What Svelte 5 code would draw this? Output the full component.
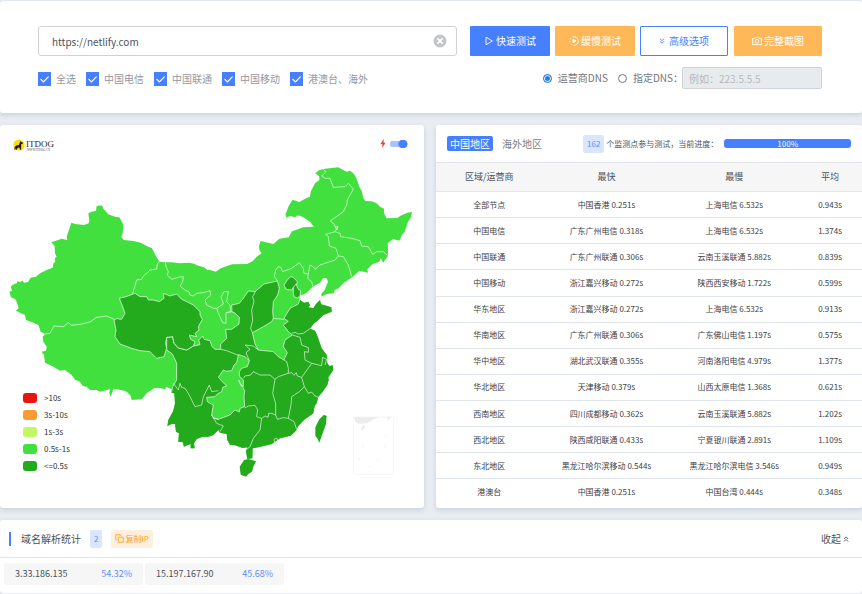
<script>
  let url = $state('https://netlify.com');
  let dns = $state('isp');
  let customDns = $state('');
  let animate = $state(true);

  let lines = $state([
    { name: '全选', on: true },
    { name: '中国电信', on: true },
    { name: '中国联通', on: true },
    { name: '中国移动', on: true },
    { name: '港澳台、海外', on: true }
  ]);

  const legend = [
    ['>10s', '#e81410'],
    ['3s-10s', '#fa9a33'],
    ['1s-3s', '#c0f763'],
    ['0.5s-1s', '#42e03f'],
    ['<=0.5s', '#24aa1d']
  ];

  const rows = [
    ['全部节点', '中国香港 0.251s', '上海电信 6.532s', '0.943s'],
    ['中国电信', '广东广州电信 0.318s', '上海电信 6.532s', '1.374s'],
    ['中国联通', '广东广州联通 0.306s', '云南玉溪联通 5.882s', '0.839s'],
    ['中国移动', '浙江嘉兴移动 0.272s', '陕西西安移动 1.722s', '0.599s'],
    ['华东地区', '浙江嘉兴移动 0.272s', '上海电信 6.532s', '0.913s'],
    ['华南地区', '广东广州联通 0.306s', '广东佛山电信 1.197s', '0.575s'],
    ['华中地区', '湖北武汉联通 0.355s', '河南洛阳电信 4.979s', '1.377s'],
    ['华北地区', '天津移动 0.379s', '山西太原电信 1.368s', '0.621s'],
    ['西南地区', '四川成都移动 0.362s', '云南玉溪联通 5.882s', '1.202s'],
    ['西北地区', '陕西咸阳联通 0.433s', '宁夏银川联通 2.891s', '1.109s'],
    ['东北地区', '黑龙江哈尔滨移动 0.544s', '黑龙江哈尔滨电信 3.546s', '0.949s'],
    ['港澳台', '中国香港 0.251s', '中国台湾 0.444s', '0.348s']
  ];

  const ips = [
    ['3.33.186.135', '54.32%'],
    ['15.197.167.90', '45.68%']
  ];

  const mainland =
    'M28 515L36 512 32 500 38 494 50 490 52 484 60 486 68 482 72 488 84 486 92 473 108 470 120 460 140 450 158 443 160 430 166 425 164 415 170 410 165 400 164 378 154 367 185 356 202 360 200 350 205 335 214 308 225 312 252 315 266 310 268 302 265 280 275 275 288 272 290 258 306 256 310 266 325 283 345 290 358 292 368 310 370 322 368 340 364 352 372 360 400 363 422 368 440 378 456 385 466 405 478 425 496 427 515 427 540 430 568 428 585 432 590 436 612 442 622 450 630 450 648 455 662 445 696 433 740 432 758 424 770 410 785 400 778 390 777 378 782 363 820 372 838 356 866 352 876 334 910 322 942 320 930 305 910 292 900 287 890 287 886 292 870 288 860 293 856 284 866 258 878 239 898 246 915 236 930 230 932 215 945 190 958 180 958 170 952 164 946 160 958 150 975 146 1015 142 1024 147 1040 155 1050 152 1060 160 1068 172 1078 200 1086 215 1090 235 1096 243 1115 244 1130 250 1140 260 1152 266 1152 280 1160 295 1192 294 1200 288 1222 278 1236 276 1232 294 1224 305 1214 335 1206 345 1198 362 1180 357 1163 370 1164 385 1164 408 1155 420 1150 428 1142 415 1138 425 1118 432 1102 448 1104 458 1078 452 1068 462 1056 472 1030 490 1016 505 1004 510 1002 520 980 522 965 530 964 522 974 510 984 485 980 475 970 474 960 488 938 500 920 518 910 524 902 524 898 532 900 540 912 548 925 546 930 556 926 562 940 565 948 552 960 540 963 553 994 562 995 575 978 582 970 585 955 600 940 612 930 626 945 632 951 645 965 685 980 705 982 730 988 738 998 736 1000 750 985 772 986 780 982 795 968 815 955 830 950 850 944 858 940 880 912 900 895 918 888 932 880 940 872 947 840 955 825 965 815 972 800 976 775 982 758 985 757 1015 742 1017 738 995 742 982 728 984 705 976 690 974 682 960 680 942 660 938 655 930 640 945 625 950 608 950 590 957 582 970 584 985 572 985 572 972 562 976 552 980 548 966 535 965 537 940 528 935 525 912 515 912 502 918 505 900 520 872 525 850 523 820 514 818 515 808 508 805 500 800 495 808 480 804 462 805 440 820 425 838 395 840 392 828 380 815 372 812 350 807 340 808 332 830 328 818 330 808 300 815 290 810 270 810 260 800 248 798 240 785 226 780 215 765 195 750 180 752 160 740 135 728 132 705 125 695 138 692 140 680 130 665 128 650 135 642 122 635 115 615 100 608 78 600 75 585 60 578 48 572 56 565 50 545 45 537 33 532Z';

  const qinghai =
    'M358 535L378 530 405 520 420 530 440 530 445 540 460 540 478 545 492 535 490 520 510 528 530 522 545 538 560 545 580 555 600 575 600 585 607 598 595 620 597 630 585 640 590 650 568 645 572 658 585 665 580 678 560 690 535 684 522 670 518 650 500 652 497 670 500 685 492 710 470 715 450 695 420 692 395 685 360 672 345 650 348 630 342 600 350 596 365 598 375 580 368 560Z';

  const south =
    'M500 652L518 650 522 670 535 684 560 690 580 678 600 674 596 660 608 648 612 658 630 662 636 680 645 688 662 688 662 672 680 655 677 628 695 628 717 612 718 592 706 580 696 575 695 555 718 550 730 535 745 513 765 515 792 492 832 483 838 505 833 525 820 545 818 575 820 595 815 605 790 620 757 638 765 672 775 690 820 695 835 710 852 720 862 698 850 680 855 660 877 645 865 635 850 615 865 604 852 595 870 565 895 552 900 537 1050 537 1050 900 900 1010 700 1060 480 1000 480 860 515 815 518 800 530 780 530 730 522 712 515 700 500 690Z';

  const southwestLight =
    'M715 704L735 710 748 722 742 740 725 745 718 755 718 768 730 780 730 800 722 796 716 780 734 812 732 830 734 860 720 865 718 876 705 870 690 885 655 898 640 893 635 885 640 855 630 850 622 845 620 832 645 830 652 822 665 815 668 802 680 798 668 786 655 772 670 750 680 754 695 752 702 735 710 728Z';

  const borders = [
    'M478 425L472 432 470 447 450 450 440 460 430 468 425 478 410 480 404 500 398 520',
    'M135 642L150 640 162 618 190 620 205 608 215 616 245 612 270 606 290 592 320 588 342 598',
    'M496 427L498 440 505 455 502 465 515 478 535 472 550 470 548 485 540 498 555 510 567 516 570 525 580 528 590 520 610 518 630 512 632 525 615 540 620 555 640 565 650 565 670 552 663 530 672 515 685 515 680 545 690 555 692 575 678 578 678 610 668 608 655 580 650 565',
    'M678 578L696 575M768 512L758 530 762 545 755 570 758 600 752 625 757 638',
    'M833 483L823 470 827 450 835 440 842 442 848 455 875 445 898 428 910 445 912 460 925 462 930 435 940 440 945 448 960 435 1005 420 1015 408 1008 385 988 378 985 350 977 343 1005 335 1013 320 1005 320 1002 312 991 303 1030 275 1040 255 1042 240 1060 207 1045 190 1035 200 1000 202 990 175 975 175 965 168 978 155 970 148',
    'M925 462L923 475 935 485 938 498M1015 408L1030 410 1045 435 1055 470',
    'M1005 335L1020 340 1022 350 1055 355 1080 362 1085 378 1105 380 1118 403 1130 395 1150 395 1165 408',
    'M1005 320L1010 330 1014 320',
    'M875 640L885 637 895 642 910 640 930 626M877 645L900 652 905 675 925 683 925 697 913 695 915 720 935 730 905 772 892 768 889 758 882 766 875 758 865 760 865 745 860 725 852 720',
    'M935 730L965 737 968 712 980 718 975 735',
    'M775 690L760 678 735 675 750 688 738 698 748 722M662 688L680 692 715 706M730 775L735 768 752 765 760 755 780 765 810 765 825 778 835 770 865 760',
    'M825 778L818 820 827 850 827 885M734 864L745 858 765 856 773 870 770 890 785 895 795 888 804 892 806 880 815 880 827 885 832 898 850 893 865 895',
    'M905 772L913 800 898 815 875 830 873 855 865 895 882 905 890 928M913 800L925 820 935 816 945 828 955 832',
    'M785 895L780 930 760 955 750 980 740 988M635 885L650 910 670 918 660 935M640 895L655 898',
    'M520 790L535 810 540 790 545 802 555 805 565 820 585 860 605 855 610 830 628 795 635 815 655 812',
    'M822 958L830 954 834 962 824 968Z'
  ];
</script>

{#snippet chevrons(up)}
  <svg class="chev" viewBox="0 0 8 8" aria-hidden="true">
    <path d={up ? 'M1.2 4L4 1.2 6.8 4M1.2 7.4L4 4.6 6.8 7.4' : 'M1.2 .8L4 3.6 6.800 .8M1.2 4.2L4 7 6.8 4.2'} />
  </svg>
{/snippet}

<main>
  <section class="card query">
    <div class="bar">
      <div class="url">
        <input type="text" aria-label="网址" bind:value={url} />
        <button class="clear" type="button" aria-label="清空" onclick={() => (url = '')}>
          <svg viewBox="0 0 14 14"><circle cx="7" cy="7" r="6.5" fill="#c4c5c7" /><path d="M4.4 4.4l5.2 5.2M9.6 4.4L4.4 9.6" stroke="#fff" stroke-width="1.6" /></svg>
        </button>
      </div>
      <div class="actions">
        <button class="btn blue" type="button">
          <svg viewBox="0 0 10 10"><path d="M2 1.2L8.4 5 2 8.8Z" /></svg>快速测试
        </button>
        <button class="btn orange" type="button">
          <svg viewBox="0 0 10 10"><circle cx="5" cy="5" r="4.3" stroke-dasharray="13.5 1.6 1.6 1.6 1.6 1.6 1.6 1.6" transform="rotate(-90 5 5)" /><path d="M4 3.2L6.9 5 4 6.8Z" fill="currentColor" /></svg>缓慢测试
        </button>
        <button class="btn outline" type="button">{@render chevrons(false)}高级选项</button>
        <button class="btn orange wide" type="button">
          <svg viewBox="0 0 10 10"><path d="M.6 2.4h2.2l.8-1.2h2.8l.8 1.2h2.2v6.2H.6Z" /><circle cx="5" cy="5.3" r="1.8" /></svg>完整截图
        </button>
      </div>
    </div>
    <div class="options">
      <div class="lines">
        {#each lines as line}
          <label><input type="checkbox" bind:checked={line.on} />{line.name}</label>
        {/each}
      </div>
      <div class="dns">
        <label><input type="radio" name="dns" value="isp" bind:group={dns} />运营商DNS</label>
        <label><input type="radio" name="dns" value="custom" bind:group={dns} />指定DNS：</label>
        <input class="server" type="text" aria-label="指定DNS" placeholder="例如：223.5.5.5" disabled={dns !== 'custom'} bind:value={customDns} />
      </div>
    </div>
  </section>

  <div class="columns">
    <section class="card map">
      <header>
        <svg class="logo" viewBox="0 0 42 13" role="img" aria-label="ITDOG">
          <circle cx="6" cy="6" r="5.6" fill="#f9dc0a" />
          <path d="M1 11.5l.8-3.6 1.5-1.4 2.6-.6 1-2.4.4-1.6 1 1.2 1.6.6-.2 1-1.4.3-.2 2.6.1 3.2H7.1l-.6-2.4-1.9.3-.9 2.1H2.4l.2-1.9Z" fill="#1e1a10" />
          <text x="13" y="8" class="brand">ITDOG</text>
          <text x="14" y="12" class="site">WWW.ITDOG.CN</text>
        </svg>
        <label class="anim">
          <svg viewBox="0 0 6 9" aria-hidden="true"><path d="M3.8 0L.4 5h2L2 9l3.6-5.2h-2Z" fill="#f2413d" /></svg>
          <input type="checkbox" role="switch" aria-label="动画" bind:checked={animate} />
        </label>
      </header>
      <svg class="china" viewBox="0 120 1272 1044" role="img" aria-label="中国地图">
        <defs><clipPath id="coast"><path d={mainland} /></clipPath></defs>
        <path d={mainland} fill="#42e03f" />
        <g clip-path="url(#coast)" class="dark">
          <path d={south} />
          <path d={qinghai} />
          <path d="M852 495L862 480 872 470 880 472 892 485 888 500 880 502 875 510 858 508Z" />
          <path d="M880 502L888 492 895 508 902 512 900 528 892 534 882 530 880 518Z" />
          <path class="light" d={southwestLight} />
        </g>
        <g class="edges" clip-path="url(#coast)">
          {#each borders as d}<path {d} />{/each}
          <path d="M820 595L852 598" />
        </g>
        <path fill="#24aa1d" d="M732 1020L745 1017 768 1024 760 1040 756 1055 745 1062 738 1070 722 1064 719 1040Z" />
        <path fill="#24aa1d" d="M972 884L980 888 978 912 966 945 958 968 952 955 946 948 946 922 958 898Z" />
        <g class="inset">
          <rect x="1061" y="891" width="120" height="172" />
          <path d="M1063 892h74l-20 8-16 10-26 2-10-8Z" />
          <path d="M1161 892h10l-6 8ZM1084 924l6-7h5l-5 10-6 4ZM1086 984l6-8M1158 950v-8M1153 985l5-12M1074 1012l5 9M1132 1023l5-8M1106 1041h4" stroke="#ececec" />
        </g>
      </svg>
      <ul class="legend">
        {#each legend as [label, color]}
          <li><i style:background={color}></i>{label}</li>
        {/each}
      </ul>
    </section>

    <section class="card result">
      <header>
        <button class="tab on" type="button">中国地区</button>
        <button class="tab" type="button">海外地区</button>
        <div class="status">
          <span class="badge">162</span>
          <span>个监测点参与测试，当前进度：</span>
          <div class="progress" role="progressbar" aria-label="当前进度" aria-valuenow="100">100%</div>
        </div>
      </header>
      <table>
        <thead>
          <tr><th>区域/运营商</th><th>最快</th><th>最慢</th><th>平均</th></tr>
        </thead>
        <tbody>
          {#each rows as row}
            <tr>{#each row as cell}<td>{cell}</td>{/each}</tr>
          {/each}
        </tbody>
      </table>
    </section>
  </div>

  <section class="card resolve">
    <header>
      <h2>域名解析统计</h2>
      <span class="badge">2</span>
      <button class="copy" type="button">
        <svg viewBox="0 0 9 9"><path d="M3.2 3.2h5v5h-5ZM1.8 5.8h-1v-5h5v1" /></svg>复制IP
      </button>
      <button class="fold" type="button">收起{@render chevrons(true)}</button>
    </header>
    <div class="ips">
      {#each ips as [ip, share]}
        <div class="ip"><span>{ip}</span><b>{share}</b></div>
      {/each}
    </div>
  </section>
</main>

<style>
  :global(body) {
    background: #e9edf2;
  }
  main {
    padding-top: 1px;
    font: 10px/16px 'Noto Sans CJK SC', sans-serif;
    color: #4d5259;
    display: flex;
    flex-direction: column;
    gap: 12px;
    overflow: hidden;
  }
  * {
    box-sizing: border-box;
  }
  button,
  input {
    font: inherit;
    color: inherit;
    margin: 0;
  }
  button {
    border: 0;
    padding: 0;
    background: none;
    cursor: pointer;
  }
  svg {
    display: block;
    flex: none;
  }
  .card {
    background: #fff;
    border-radius: 3px;
    box-shadow: 0 2px 5px rgba(120, 140, 165, 0.3);
  }
  .query {
    padding: 25px 40px 24px 38px;
    display: flex;
    flex-direction: column;
    gap: 11px;
  }
  .bar {
    display: flex;
    gap: 13px;
  }
  .url {
    flex: 1;
    display: flex;
    align-items: center;
    border: 1px solid #ced1d9;
    border-radius: 3px;
    padding-right: 9px;
  }
  .url input {
    flex: 1;
    min-width: 0;
    height: 28px;
    border: 0;
    outline: 0;
    background: none;
    padding: 0 13px;
  }
  .clear svg {
    width: 14px;
    height: 14px;
  }
  .actions {
    display: flex;
    gap: 5px;
  }
  .btn {
    display: flex;
    align-items: center;
    justify-content: center;
    gap: 2px;
    width: 80px;
    height: 30px;
    border-radius: 1px;
    color: #fff;
  }
  .btn svg,
  .copy svg,
  .chev {
    width: 10px;
    height: 10px;
    fill: none;
    stroke: currentColor;
    stroke-width: 0.9;
  }
  .blue {
    background: #467fff;
  }
  .orange {
    background: #ffb858;
  }
  .outline {
    gap: 4px;
    width: 88px;
    border: 1px solid #467fff;
    color: #467fff;
    background: #fff;
  }
  .wide {
    width: 88px;
    margin-left: 1px;
  }
  .chev,
  .outline .chev,
  .btn .chev {
    width: 6px;
    height: 6px;
    stroke-width: 1.2;
  }
  .options,
  .lines,
  .dns,
  .options label {
    display: flex;
    align-items: center;
  }
  .options {
    justify-content: space-between;
  }
  .lines {
    gap: 10px;
    padding-top: 2px;
    color: #93989f;
  }
  .lines label {
    gap: 5px;
  }
  .lines input {
    appearance: none;
    width: 13px;
    height: 14px;
    background: #467fff
      url("data:image/svg+xml,%3Csvg xmlns='http://www.w3.org/2000/svg' viewBox='0 0 13 14'%3E%3Cpath d='M2.5 7l3 3L10.600 4.600' fill='none' stroke='white' stroke-width='1.100'/%3E%3C/svg%3E");
  }
  .lines input:not(:checked) {
    background: #fff;
    border: 1px solid #ced1d9;
  }
  .dns {
    color: #6f757d;
  }
  .dns label {
    gap: 6px;
    margin-right: 10px;
  }
  .dns label + label {
    margin-right: -1px;
  }
  .dns input[type='radio'] {
    appearance: none;
    width: 9px;
    height: 9px;
    border: 1px solid #767676;
    border-radius: 50%;
    background: #fff;
  }
  .dns input[type='radio']:checked {
    border-color: #2b7de0;
    background: #2b7de0;
    box-shadow: inset 0 0 0 1px #fff;
  }
  .server {
    width: 140px;
    height: 22px;
    padding: 0 6px;
    border: 1px solid #ced4da;
    border-radius: 2px;
    background: #fff;
  }
  .server:disabled {
    background: #e8ebee;
  }
  .server::placeholder {
    color: #b4b9bf;
    opacity: 1;
  }

  .columns {
    display: grid;
    grid-template-columns: 424fr 426fr;
    gap: 12px;
  }
  .map {
    position: relative;
  }
  .map header {
    display: flex;
    justify-content: space-between;
    align-items: flex-start;
    height: 35px;
    padding: 14px 16px 0 13px;
  }
  .logo {
    width: 42px;
    height: 13px;
  }
  .brand {
    font: 9px 'Liberation Serif', serif;
    fill: #2b2b2b;
  }
  .site {
    font: 3px 'Liberation Serif', serif;
    fill: #555;
  }
  .anim {
    display: flex;
    align-items: center;
    gap: 4px;
    height: 9px;
  }
  .anim svg {
    width: 6px;
    height: 9px;
  }
  .anim input {
    appearance: none;
    width: 18px;
    height: 8px;
    background:
      radial-gradient(circle at 13px 4px, #467fff 4px, transparent 5px),
      linear-gradient(#a9c3ff, #a9c3ff) 0 1px / 14px 6px no-repeat;
    border-radius: 4px;
  }
  .china {
    width: 100%;
    height: auto;
  }
  .dark path {
    fill: #24aa1d;
    stroke: rgba(255, 255, 255, 0.65);
    stroke-width: 3;
  }
  .dark .light {
    fill: #42e03f;
  }
  .edges path {
    fill: none;
    stroke: rgba(255, 255, 255, 0.6);
    stroke-width: 3;
  }
  .inset rect {
    fill: none;
    stroke: #f6f6f6;
    stroke-width: 3;
  }
  .inset path {
    fill: #ececec;
    stroke-width: 2;
  }
  .legend {
    position: absolute;
    left: 23px;
    bottom: 34px;
    margin: 0;
    padding: 0;
    list-style: none;
    font-size: 8px;
    line-height: 17px;
    color: #333;
  }
  .legend li {
    display: flex;
    align-items: center;
    gap: 7px;
  }
  .legend i {
    width: 14px;
    height: 10px;
    border-radius: 3px;
  }

  .result header {
    display: flex;
    align-items: center;
    gap: 6px;
    height: 37px;
    padding: 0 11px;
  }
  .tab {
    padding: 0 3px;
    line-height: 15px;
    border-radius: 2px;
    color: #7b8087;
  }
  .tab.on {
    background: #467fff;
    color: #fff;
  }
  .status {
    flex: 1;
    display: flex;
    align-items: center;
    gap: 2px;
    margin-left: 32px;
    font-size: 8px;
    white-space: nowrap;
  }
  .badge {
    padding: 0 4px;
    border-radius: 2px;
    background: #dae5ff;
    color: #5e8fff;
    font-size: 8px;
    line-height: 18px;
  }
  .progress {
    flex: 1;
    margin-left: 4px;
    border-radius: 3px;
    background: #467fff;
    color: #fff;
    line-height: 9px;
    text-align: center;
  }
  table {
    width: 100%;
    height: 343px;
    border-collapse: collapse;
    table-layout: fixed;
    text-align: center;
    white-space: nowrap;
  }
  th {
    width: 30%;
    height: 29px;
    padding: 0;
    border-block: 1px solid #e2e6ea;
    background: #f6f6f6;
    font-size: 9px;
    font-weight: 400;
  }
  th:first-child {
    width: 25%;
  }
  th:last-child {
    width: 15%;
  }
  td {
    height: 26px;
    padding: 0;
    border-bottom: 1px solid #dfe5ea;
    font-size: 8px;
    color: #3c4045;
  }
  tr:last-child td {
    border-bottom: 0;
  }

  .resolve header {
    display: flex;
    align-items: center;
    gap: 9px;
    height: 38px;
    padding: 0 13px 0 9px;
    border-bottom: 1px solid #e2e4e6;
  }
  h2 {
    margin: 0;
    padding-left: 10px;
    border-left: 2px solid #467fff;
    font-size: 10px;
    font-weight: 400;
    line-height: 14px;
  }
  .copy {
    display: flex;
    align-items: center;
    gap: 1px;
    padding: 0 4px;
    border-radius: 2px;
    background: #fff0dd;
    color: #ff9f22;
    font-size: 8px;
    line-height: 18px;
  }
  .copy svg {
    width: 9px;
    height: 9px;
  }
  .fold {
    display: flex;
    align-items: center;
    gap: 2px;
    margin-left: auto;
  }
  .ips {
    display: flex;
    gap: 2px;
    padding: 5px 4px 8px;
  }
  .ip {
    display: flex;
    justify-content: space-between;
    width: 139px;
    padding: 0 11px;
    border-radius: 2px;
    background: #f6f6f6;
    font-size: 9px;
    line-height: 22px;
  }
  .ip b {
    font-weight: 400;
    color: #5e8fff;
  }
</style>
